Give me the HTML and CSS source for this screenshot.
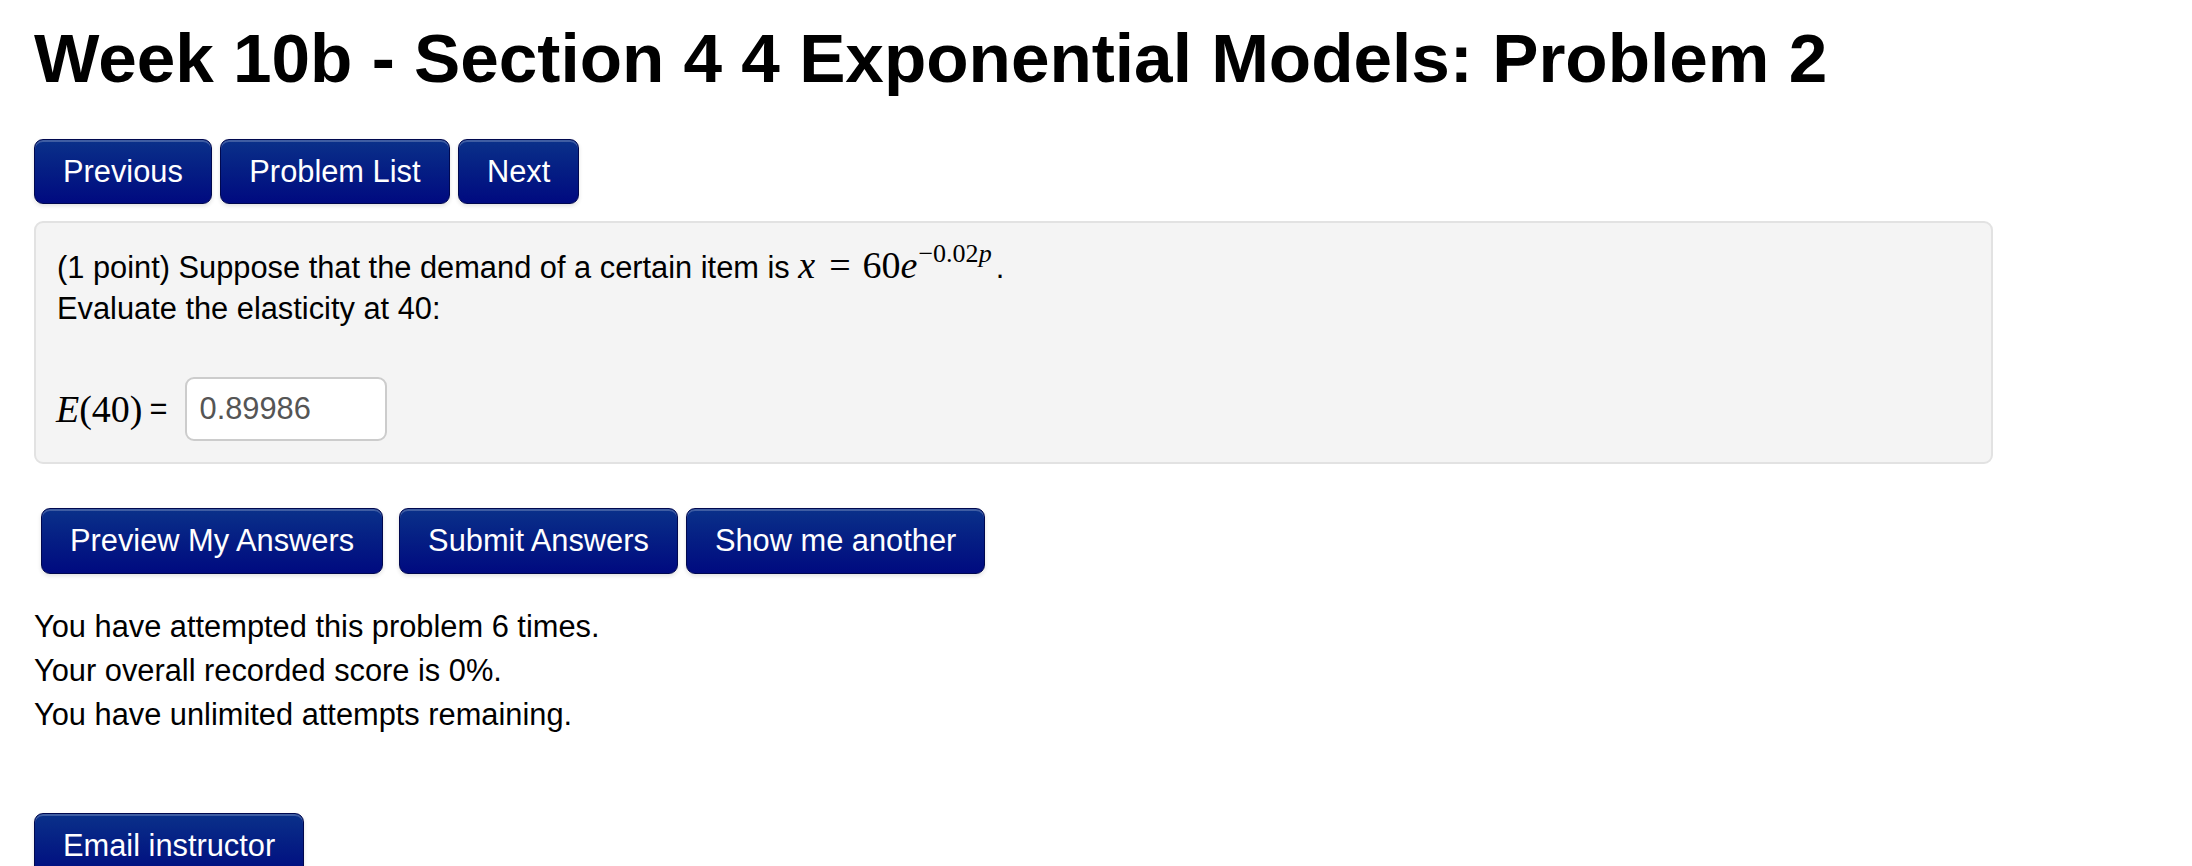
FILE: index.html
```html
<!DOCTYPE html>
<html>
<head>
<meta charset="utf-8">
<link rel="stylesheet" href="styles.css">
</head>
<body>
<div class="page">
  <h1 class="title">Week 10b - Section 4 4 Exponential Models: Problem 2</h1>
  <div class="nav">
    <a class="btn">Previous</a>
    <a class="btn">Problem List</a>
    <a class="btn">Next</a>
  </div>
  <div class="problem">
    <div class="line">(1 point) Suppose that the demand of a certain item is <span class="math"><i>x</i><span class="rel">=</span>60<i>e</i><sup>−0.02<i>p</i></sup></span><span class="dot">.</span></div>
    <div class="line">Evaluate the elasticity at 40:</div>
    <div class="line blank"></div>
    <div class="answer-row">
      <span class="math"><i>E</i>(40)</span><span class="eq">=</span>
      <span class="input">0.89986</span>
    </div>
  </div>
  <div class="actions">
    <a class="btn preview">Preview My Answers</a>
    <a class="btn submit">Submit Answers</a>
    <a class="btn">Show me another</a>
  </div>
  <div class="status">
    <div class="line">You have attempted this problem 6 times.</div>
    <div class="line">Your overall recorded score is 0%.</div>
    <div class="line">You have unlimited attempts remaining.</div>
  </div>
  <div class="email">
    <a class="btn">Email instructor</a>
  </div>
</div>
</body>
</html>
```
FILE: styles.css
```css
html, body {
  margin: 0;
  padding: 0;
  background: #ffffff;
}
body {
  font-family: "Liberation Sans", Arial, Helvetica, sans-serif;
  font-size: 30.8px;
  line-height: 44px;
  color: #000000;
}
.page {
  padding: 0 34px;
}
.title {
  margin: 0;
  padding-top: 14px;
  font-size: 69.3px;
  line-height: 88px;
  font-weight: bold;
  color: #000;
}
.nav {
  display: flex;
  gap: 8.5px;
  margin-top: 37px;
}
.btn {
  display: inline-block;
  box-sizing: border-box;
  height: 65px;
  padding: 9.5px 28px;
  border: 1px solid #00084f;
  border-radius: 9px;
  background: linear-gradient(to bottom, #0a318a 0%, #051f84 45%, #000a80 100%);
  box-shadow: inset 0 2px 0 rgba(255, 255, 255, 0.22), 0 2px 4px rgba(0, 0, 0, 0.12);
  color: #ffffff;
  font-size: 30.8px;
  line-height: 44px;
  white-space: nowrap;
  text-decoration: none;
}
.problem {
  margin-top: 17px;
  width: 1959px;
  box-sizing: border-box;
  padding: 20px 21px 20px 21px;
  background: #f4f4f4;
  border: 2px solid #e2e2e2;
  border-radius: 9px;
}
.line {
  height: 44px;
  white-space: nowrap;
}
.math {
  font-family: "Liberation Serif", "Times New Roman", serif;
  font-size: 38px;
}
.math i {
  font-style: italic;
}
.math .rel {
  margin: 0 12px 0 14px;
}
.math sup {
  font-size: 26px;
  vertical-align: 0;
  position: relative;
  top: -16px;
  margin-left: 1px;
}
.dot {
  margin-left: 4px;
}
.answer-row {
  display: flex;
  align-items: center;
  height: 66px;
  margin-top: 1px;
}
.answer-row .math {
  margin-left: -1px;
}
.eq {
  margin-left: 7px;
}
.input {
  margin-left: 17px;
  box-sizing: border-box;
  width: 202px;
  height: 64px;
  padding: 0 13px;
  background: #ffffff;
  border: 2px solid #cccccc;
  border-radius: 9px;
  color: #555555;
  line-height: 60px;
}
.actions {
  display: flex;
  margin-top: 44px;
  padding-left: 7px;
}
.actions .btn {
  height: 66px;
  padding: 10px 28px;
}
.actions .preview {
  margin-right: 16px;
}
.actions .submit {
  margin-right: 8px;
}
.status {
  margin-top: 31px;
}
.email {
  margin-top: 76px;
}
.email .btn {
  height: 66px;
  padding: 10px 28px;
}
```
